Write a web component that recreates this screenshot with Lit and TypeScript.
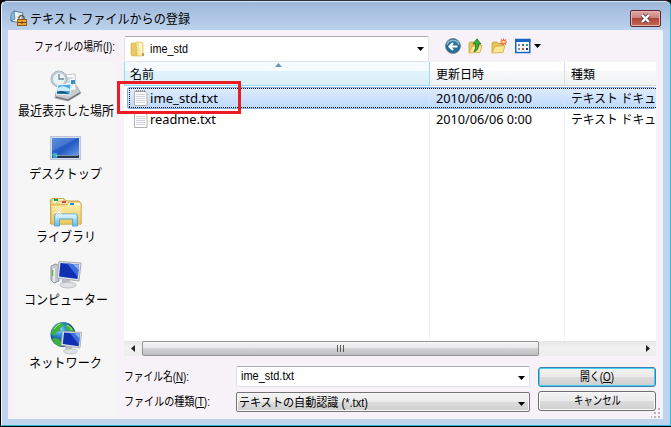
import { LitElement, html, css, svg } from "lit";
import { customElement } from "lit/decorators.js";

/* One line of text fitted to a fixed advance width; the baseline sits at y = 13 of 17.
   An access key is marked by a rule from x = key[0], key[1] pixels long. */
const label = (width: number, size: number, content: string, key?: [number, number]) => html`
  <svg class="t" width=${width} height="17" font-size=${size}>
    <text x="0" y="13" textLength=${width} lengthAdjust="spacingAndGlyphs">${content}</text>
    ${key ? svg`<path d="M${key[0]} 14.500h${key[1]}" stroke="#000"/>` : ""}
  </svg>`;

const recentIcon = svg`
  <path d="M6 22 23 11 31 23 18 31 5 28Z" fill="#c9cbcd" stroke="#a5a8ab"/>
  <path d="M6 27 18 30 30 23" fill="none" stroke="#777b80" stroke-width="1.5"/>
  <path d="M13 5 25 4 26 20 12 21Z" fill="#fbfcfc" stroke="#c3c9ce"/>
  <path d="M17 8h6M17 10h3M17 12h3M17 15h6M17 17h5" stroke="#a9b7c2"/>
  <path d="M21 10h4v4h-4z" fill="#3a94c8"/>
  <circle cx="9" cy="9" r="8" fill="#bccbd3" stroke="#a8b6be"/>
  <circle cx="9" cy="9" r="6" fill="#e9f1f4"/>
  <path d="M9 4v5h5" fill="none" stroke="#6f8694" stroke-width="1.3"/>
  <path d="M8 15 21 14 20 25 6 24Z" fill="#4aa6e4" stroke="#eef6fb"/>
  <path d="M8 18q5-4 12 1l-.3 2H7.5z" fill="#c9efff"/>
  <path d="M7 22q6-3 12 2L7 23.500z" fill="#17597a"/>`;

const desktopIcon = svg`
  <defs><linearGradient id="dk" x2="1" y2="1"><stop stop-color="#3f7fdc"/><stop offset=".5" stop-color="#2458c4"/><stop offset="1" stop-color="#72a7ee"/></linearGradient></defs>
  <rect x=".5" y="3.500" width="30" height="23" fill="#d5dceb" stroke="#bcc5da"/>
  <rect x="2" y="5" width="27" height="20" fill="url(#dk)"/>
  <path d="M2 5h26L2 18z" fill="#fff" opacity=".13"/>
  <rect x="2" y="22" width="27" height="3" fill="#26364e"/>
  <path d="M8 22.500h20" stroke="#8190a6"/>
  <circle cx="5" cy="22.500" r="2.800" fill="#29a8d8"/>
  <path d="M3.500 22h1.500v-1.500z" fill="#f79a30"/><path d="M5 22h2v2z" fill="#a5e05a"/>`;

const libraryIcon = svg`
  <defs><linearGradient id="lb" x2="0" y2="1"><stop stop-color="#fff0b4"/><stop offset="1" stop-color="#e9c75e"/></linearGradient>
  <linearGradient id="lg" x2="0" y2="1"><stop stop-color="#d2f3ff"/><stop offset="1" stop-color="#69b9dc"/></linearGradient></defs>
  <path d="M.5 28V4L2 2.500h12L16 5h13l2 3v20z" fill="#edcf77" stroke="#cda64b"/>
  <path d="M3 3h10v4H3z" fill="#fffdf0"/><path d="M4 3h4v2H4z" fill="#19a33b"/>
  <path d="M7 8V6l1-1h10l2 2h10v3z" fill="#f7e6a8" stroke="#cfae58" stroke-width=".7"/>
  <path d="M12 5h4v2h-4z" fill="#d4493e"/>
  <path d="M1 28V9h16l2-3h11l1 2v20z" fill="url(#lb)" stroke="#d3b052" stroke-width=".8"/>
  <path d="M19 7h10v2H19z" fill="#fff"/><path d="M20 7h4v2h-4z" fill="#1b8fe0"/>
  <path d="M4.500 30V20q0-2 2-2h19q2 0 2 2v10h-5v-7h-13v7z" fill="url(#lg)" stroke="#63aac9"/>
  <path d="M6 19h20M6 21h20" stroke="#effbff" opacity=".7"/>
  <path d="M9 12v8M5 16h8M6 13l6 6M12 13l-6 6" stroke="#fff" stroke-width=".8" opacity=".8"/>`;

const screen = svg`
  <path d="M12 20 20 21 19 26 12 25Z" fill="#b9bec3"/>
  <ellipse cx="18" cy="26" rx="8" ry="3" fill="#dfe2e4" stroke="#aeb3b7" stroke-width=".8"/>
  <path d="M9 2.500 31 4 29 22 7 19Z" fill="#e1e5e9" stroke="#a3abb5"/>
  <path d="M10.500 4 29 5.500 27.500 20 9 17.500Z" fill="#1030b4"/>
  <path d="M17 4.500 29 5.500 28 18Z" fill="#3f6ede"/><path d="M23 5 29 5.500 28.500 11Z" fill="#8fb6f4"/>`;

const computerIcon = svg`
  <path d="M1 7 6 5 9 7V22L4 24 1 21Z" fill="#c5cace" stroke="#8d959b"/>
  <path d="M4 9v14" stroke="#f3f5f6" stroke-width="1.500"/><path d="M2.500 11v6" stroke="#62b846" stroke-width="1.500"/>
  ${screen}`;

const networkIcon = svg`
  <defs><radialGradient id="gl" cx=".35" cy=".28"><stop stop-color="#9fe9ff"/><stop offset=".5" stop-color="#2d8fd8"/><stop offset="1" stop-color="#14488f"/></radialGradient></defs>
  <circle cx="13" cy="12.500" r="12.500" fill="url(#gl)"/>
  <path d="M2 8Q6 1 12 1l2 3-4 2 1 3-5 1-1 4-4-2zM4 16l5 1 4 5-3 3Q4 22 2 17zM16 2q6 2 8 7l-4 1-4-3z" fill="#3fb13c"/>
  <path d="M4 7q3-4 6-5M17 3q4 2 5 5" stroke="#b3eb7b" fill="none"/>
  <g transform="translate(5 7) scale(.86)">${screen}</g>`;

const folder = svg`
  <path d="M1 2h5l1 1v12H2l-1-1z" fill="#e9c865" stroke="#d7ae45" stroke-width=".6"/>
  <path d="M6 1h5l2 1v13H7z" fill="#f9e49b" stroke="#dab850" stroke-width=".6"/>
  <path d="M9 2h3v9l-2 3z" fill="#fff5cb"/><path d="M12 12h2v3h-2z" fill="#bba153"/>`;

const openFolder = svg`
  <path d="M1 15V5l1-1h4l1 1.500h5V9" fill="#e7c35b" stroke="#caa03c" stroke-width=".8"/>
  <path d="M1 15 4 8.500l10-1L12 14.500z" fill="#fbe693" stroke="#d0a943" stroke-width=".8"/>`;

const page = svg`
  <path d="M.5 1.500h11l1.500 2v12H.5z" fill="#fcfcfc" stroke="#b3b1ae"/>
  <path d="M2 1h9" stroke="#8d8a86" stroke-width="2" stroke-dasharray="1 1"/>
  <path d="M2 4.500h9M2 6.500h9M2 8.500h9M2 10.500h9M2 12.500h9" stroke="#cfd3da"/>`;

const places = [
  { icon: recentIcon, name: "最近表示した場所", width: 96 },
  { icon: desktopIcon, name: "デスクトップ", width: 73 },
  { icon: libraryIcon, name: "ライブラリ", width: 60 },
  { icon: computerIcon, name: "コンピューター", width: 84 },
  { icon: networkIcon, name: "ネットワーク", width: 73 },
];
const files = [
  { name: "ime_std.txt", width: 68, selected: true },
  { name: "readme.txt", width: 66, selected: false },
];

@customElement("app-root")
export class AppRoot extends LitElement {
  static styles = css`
    :host { display: block; width: 671px; height: 427px; background: #000; overflow: hidden;
      font-family: "Noto Sans", "Noto Sans CJK JP", sans-serif; color: #000; }
    * { box-sizing: border-box; }
    svg { display: block; flex: none; overflow: visible; }
    .where, .combo, .form { font-family: "Liberation Sans", "Noto Sans CJK JP", sans-serif; }
    .window { width: 670px; height: 426px; padding: 0 6px 5px; border: 1px solid #29b9d3;
      border-left: 1px solid #eef5fc; border-top: 1px solid #2f303c; margin-left: 1px; border-radius: 6px 6px 0 0;
      background: linear-gradient(#9db7d9, #bdd3ee 30px, #bdd3ee); box-shadow: inset 0 1px #d5e3f3; }
    .title { height: 29px; display: flex; align-items: flex-start; padding: 9px 1px 0 2px; }
    .title .t { margin: 0 0 0 3px; }
    .close { margin: 0 2px 0 auto; width: 31px; height: 17px; border: 1px solid #5a2732; border-radius: 2px;
      background: linear-gradient(#e0a9a5, #cc827c 47%, #b14338 50%, #c66a57);
      box-shadow: inset 0 0 0 1px #e6b5b0; display: flex; justify-content: center; align-items: center; }
    .client { width: 655px; height: 389px; background: #f7f2f7; padding: 6px 7px 0;
      display: grid; grid-template-columns: 101px 533px; column-gap: 8px; grid-template-rows: 26px 1fr; position: relative; }
    .where { padding: 2px 1px 0 0; display: flex; justify-content: flex-end; }
    .look { display: flex; align-items: center; }
    .combo { width: 305px; height: 26px; border: 1px solid #e2e3ea; border-top-color: #abadb3; border-radius: 2px;
      background: #fff; display: flex; align-items: center; padding: 0 4px 0 5px; gap: 5px; }
    .combo .t { margin-top: -1px; }
    .grow { flex: 1; }
    .tools { display: flex; align-items: center; gap: 7px; margin: -6px 0 0 16px; }
    .drop { margin-left: -4px; }
    .places { background: #f6f6f6; height: 354px; padding-top: 8px; display: flex; flex-direction: column; }
    .place { height: 63px; display: flex; flex-direction: column; align-items: center; }
    .main { display: flex; flex-direction: column; }
    .list { height: 279px; background: #fff; display: flex; flex-direction: column; width: 532px; overflow: hidden; }
    .row { display: grid; grid-template-columns: 306px 135px 91px; flex: none; height: 22px; }
    .head { height: 24px; margin-bottom: 1px; }
    .head .cell { align-items: flex-start; padding-top: 4px; border-right: 1px solid #dedede; height: 24px; border-bottom: 1px solid #d5d5d5;
      background: linear-gradient(#fff 35%, #f7f8fa 40%, #f1f2f4); }
    .head .cell:last-child { border-right: 0; }
    .head .sorted { position: relative; background: linear-gradient(#f5fbff 37%, #e0f2fb 40%, #daf0f6); border-color: #96d9f9; border-left: 1px solid #96d9f9; padding-left: 5px; }
    .sort { position: absolute; left: 150px; top: 1px; }
    .cell { padding-left: 6px; display: flex; align-items: center; border-right: 1px solid #edf4fa; }
    .cell:last-child { border-right: 0; }
    .row:not(.head):not(.sel) .t { margin-top: -1px; }
    .sel { position: relative; background: linear-gradient(#dfecff, #bed9fc); border: solid #84acdd; border-width: 1px 0 1px 1px; border-radius: 3px; margin-left: 3px; grid-template-columns: 302px 135px 91px; }
    .sel .cell { border-color: #d4e5fb; }
    .focus { position: absolute; inset: 0 0 0 1px; display: block;
      background: repeating-linear-gradient(90deg, #111 0 1px, transparent 1px 2px) top / 100% 1px no-repeat,
        repeating-linear-gradient(90deg, #111 0 1px, transparent 1px 2px) bottom / 100% 1px no-repeat,
        repeating-linear-gradient(#111 0 1px, transparent 1px 2px) left / 1px 100% no-repeat; }
    .first { gap: 3px; padding-left: 10px; }
    .sel .first { padding-left: 6px; }
    .blank { flex: 1; }
    .scroll { height: 15px; width: 532px; background: linear-gradient(#e5e5e5, #f1f1f1 40%, #ededed); display: flex; align-items: center; padding: 0 6px 0 7px; }
    .thumb { width: 397px; height: 15px; margin: 0 auto 0 7px; border: 1px solid #969696; border-radius: 2px;
      background: linear-gradient(#f5f5f5, #e7e7e9 48%, #d3d3d6 50%, #bfbfc1); display: flex; align-items: center; justify-content: center; }
    .form { display: grid; grid-template-columns: 112px 294px 126px; margin-top: 10px; row-gap: 4px; grid-template-rows: 21px 21px; align-items: start; }
    .form > .t { margin-top: 2px; }
    .box { width: 294px; height: 21px; border: 1px solid #dfe1ea; border-top-color: #abadb3; border-radius: 2px; background: #fff; display: flex; align-items: flex-start; padding: 0 4px; }
    .box .arrow { margin-top: 9px; }
    .type { padding-left: 2px; height: 20px; margin-top: 1px; border-color: #747474; background: linear-gradient(#f3f3f3, #ebebeb 48%, #dcdcdc 50%, #cecece); box-shadow: inset 0 0 0 1px #f7f7f7; }
    .type .t { margin-top: 1px; }
    .button { width: 118px; height: 20px; margin: 0 0 0 8px; border: 1px solid #707070; border-radius: 3px;
      background: linear-gradient(#f3f3f3, #ebebeb 48%, #dcdcdc 50%, #cecece); box-shadow: inset 0 0 0 1px #fafafa; display: flex; justify-content: center; }
    .default { border-color: #3c7fb1; box-shadow: inset 0 0 0 1px #43d1f6; margin-top: 1px; }
    .grip { position: absolute; right: 2px; bottom: 1px; }
    .mark { position: absolute; left: 109px; top: 51px; width: 124px; height: 33px; border: 3px solid #ed1c24; }
  `;

  private arrow() {
    return html`<svg class="arrow" width="7" height="4"><path d="M0 0h7L3.500 4z"/></svg>`;
  }

  private row(f: (typeof files)[number]) {
    return html`<div class=${f.selected ? "row sel" : "row"}>
      <div class="cell first"><svg width="13" height="16">${page}</svg>${label(f.width, 13, f.name)}</div>
      <div class="cell">${label(96, 13, "2010/06/06 0:00")}</div>
      <div class="cell">${label(85, 12.5, "テキスト ドキュ")}</div>
      ${f.selected ? html`<i class="focus"></i>` : ""}
    </div>`;
  }

  render() {
    return html`
      <div class="window">
        <div class="title">
          <svg width="17" height="17">
            <path d="M4 1 13 3 11 13 1 11Z" fill="#eff8fd" stroke="#4a7ba7"/>
            <path d="M4 1Q0 3 1 11L5 9Z" fill="#8fbbdb" stroke="#37698f" stroke-width=".7"/>
            <path d="M7 4l4 1M6 7l4 1" stroke="#c6dcea"/>
            <path d="M9 10V7q2.500-3 5 0v3" fill="none" stroke="#6d5130" stroke-width="1.300"/>
            <rect x="7.500" y="9.500" width="9" height="6" fill="#eda737" stroke="#8f5c17"/>
            <path d="M8 12.500h8M12 11v3" stroke="#76460d"/>
          </svg>
          ${label(160, 13, "テキスト ファイルからの登録")}
          <div class="close"><svg width="11" height="9"><path d="M2 1 9 8M9 1 2 8" stroke="#5d4650" stroke-width="4"/><path d="M2 1 9 8M9 1 2 8" stroke="#fff" stroke-width="2.400"/></svg></div>
        </div>
        <div class="client">
          <div class="where">${label(81, 12, "ファイルの場所(I):", [71, 3])}</div>
          <div class="look">
            <div class="combo">
              <svg width="15" height="16">${folder}</svg>${label(38, 12, "ime_std")}<span class="grow"></span>${this.arrow()}
            </div>
            <div class="tools">
              <svg width="16" height="16"><circle cx="8" cy="8" r="7.500" fill="#255f8b" stroke="#78909f"/><path d="M1.500 7a6.500 5.500 0 0 1 13 0z" fill="#8bb9cf"/><circle cx="8" cy="8.500" r="5.500" fill="#28729f"/><path d="M12.500 8.500H5M8 5 4.500 8.500 8 12" fill="none" stroke="#fff" stroke-width="2.200"/></svg>
              <svg width="16" height="16">${openFolder}<path d="M6 14q5-2 4.500-8H13L9 .8 5 6h2.500q1 4-1.500 8z" fill="#39ae38" stroke="#177322" stroke-width=".8"/></svg>
              <svg width="16" height="16">${openFolder}<path d="M12.500 .5v7M9 4h7M10 1.500l5 5M15 1.500l-5 5" stroke="#f06a36" stroke-width="1.200"/><circle cx="12.500" cy="4" r="1.300" fill="#ffe18b"/></svg>
              <svg width="17" height="16"><rect x="1.750" y="1.500" width="14" height="13" fill="#fff" stroke="#1766c6" stroke-width="1.500"/><path d="M1 2.500h15.500" stroke="#1766c6" stroke-width="3"/><path d="M4 7h2M4 11h2" stroke="#7d8b9a" stroke-width="2"/><path d="M8 7h2" stroke="#4964bd" stroke-width="2"/><path d="M8 11h2" stroke="#d3532c" stroke-width="2"/><path d="M12 7h2" stroke="#37a14b" stroke-width="2"/><path d="M12 11h2" stroke="#262e91" stroke-width="2"/></svg>
              <svg class="drop" width="7" height="4"><path d="M0 0h7L3.500 4z"/></svg>
            </div>
          </div>
          <div class="places">
            ${places.map((p) => html`<div class="place"><svg width="32" height="32">${p.icon}</svg>${label(p.width, 13, p.name)}</div>`)}
          </div>
          <div class="main">
            <div class="list">
              <div class="row head">
                <div class="cell sorted">${label(24, 12.5, "名前")}<svg class="sort" width="7" height="4"><path d="M3.500 0 7 4H0z" fill="#5a9cbd"/></svg></div>
                <div class="cell">${label(48, 12.5, "更新日時")}</div>
                <div class="cell">${label(24, 12.5, "種類")}</div>
              </div>
              ${files.map((f) => this.row(f))}
              <div class="row blank"><div class="cell"></div><div class="cell"></div><div class="cell"></div></div>
            </div>
            <div class="scroll">
              <svg width="4" height="7"><path d="M4 0v7L0 3.500z" fill="#222"/></svg>
              <div class="thumb"><svg width="8" height="7"><path d="M.5 0v7M3.500 0v7M6.500 0v7" stroke="#5b5b5b"/></svg></div>
              <svg width="4" height="7"><path d="M0 0v7l4-3.500z" fill="#222"/></svg>
            </div>
            <div class="form">
              ${label(65, 12, "ファイル名(N):", [52, 7])}
              <div class="box">${label(53, 12, "ime_std.txt")}<span class="grow"></span>${this.arrow()}</div>
              <div class="button default">${label(34, 12, "開く(O)", [23, 8])}</div>
              ${label(86, 12, "ファイルの種類(T):", [73, 7])}
              <div class="box type">${label(129, 12, "テキストの自動認識 (*.txt)")}<span class="grow"></span>${this.arrow()}</div>
              <div class="button">${label(47, 12, "キャンセル")}</div>
            </div>
          </div>
          <svg class="grip" width="10" height="10"><path d="M7 1h2M7 5h2M3 5h2M7 9h2M3 9h2M0 9h1" stroke="#b9b5bc" stroke-width="2"/></svg>
          <div class="mark"></div>
        </div>
      </div>`;
  }
}
